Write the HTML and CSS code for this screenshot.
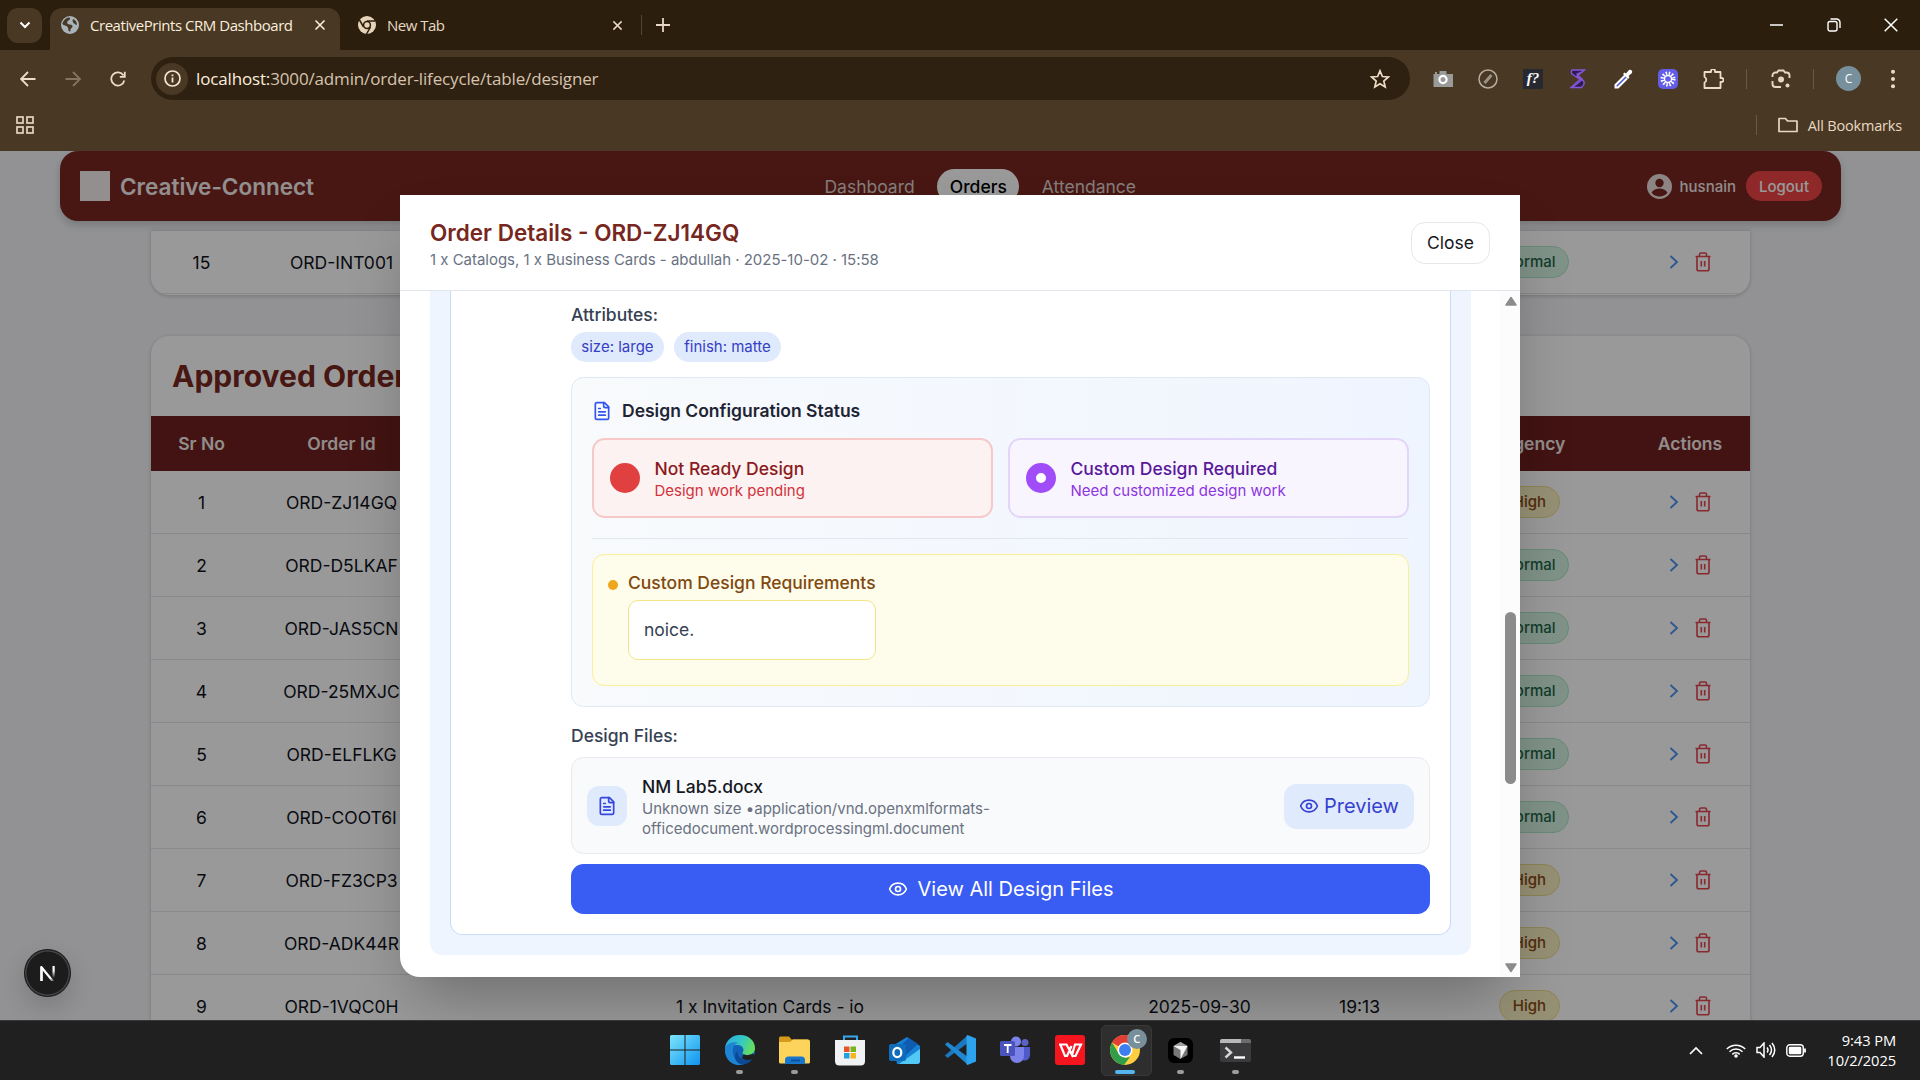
FILE: index.html
```html
<!DOCTYPE html>
<html lang="en">
<head>
<meta charset="utf-8">
<title>CreativePrints CRM Dashboard</title>
<link rel="stylesheet" href="styles.css">
</head>
<body>
<svg class="defs" aria-hidden="true">
  <symbol id="x" viewBox="0 0 12 12"><path d="M1.5 1.5l9 9M10.5 1.5l-9 9" fill="none" stroke="currentColor" stroke-width="1.6"/></symbol>
  <symbol id="chev" viewBox="0 0 10 16"><path d="M1.5 2l6.5 6-6.500 6" fill="none" stroke="#4a90f0" stroke-width="1.8"/></symbol>
  <symbol id="trash" viewBox="0 0 16 20"><path d="M0.500 4.500h15M4.500 4V2.500a1.500 1.500 0 0 1 1.500-1.500h4a1.500 1.500 0 0 1 1.500 1.500V4M2 4.500v12.500a1.800 1.800 0 0 0 1.800 1.800h8.400a1.800 1.800 0 0 0 1.800-1.800V4.500M6.300 9v5.500M9.700 9v5.500" fill="none" stroke="#e4434f" stroke-width="1.600"/></symbol>
  <symbol id="doc" viewBox="0 0 24 24"><g fill="none" stroke="currentColor" stroke-width="2" stroke-linecap="round" stroke-linejoin="round"><path d="M15 2H6a2 2 0 0 0-2 2v16a2 2 0 0 0 2 2h12a2 2 0 0 0 2-2V7z"/><path d="M14 2v4a2 2 0 0 0 2 2h4M10 9H8M16 13H8M16 17H8"/></g></symbol>
  <symbol id="eye" viewBox="0 0 24 24"><g fill="none" stroke="currentColor" stroke-width="2" stroke-linecap="round" stroke-linejoin="round"><path d="M2.060 12.350a1 1 0 0 1 0-.7 10.750 10.750 0 0 1 19.880 0 1 1 0 0 1 0 .7 10.750 10.750 0 0 1-19.880 0"/><circle cx="12" cy="12" r="3"/></g></symbol>
</svg>

<header class="browser">
  <div class="tabs">
    <div class="tab-search"><svg width="12" height="8" viewBox="0 0 12 8"><path d="M1.500 1.500L6 6l4.500-4.500" fill="none" stroke="#fff" stroke-width="2"/></svg></div>
    <div class="tab active">
      <svg width="18" height="18" viewBox="0 0 18 18"><circle cx="9" cy="9" r="9" fill="#a9b3ba"/><path d="M8 1.500c2 .5 1 2-.5 3S5.500 7 7 8s4 .2 4.500 2-2 2-2 4-1.500 2-2 .5 0-3-1.500-4S2 9 1.500 8 4 1.500 8 1.500z M12 3c2 .5 4 3 4 5.500-1 1-2-.5-3-1s-2-3-1-4.500z" fill="#483824"/></svg>
      <span class="tab-name t1">CreativePrints CRM Dashboard</span>
      <svg class="close" width="12" height="12"><use href="#x"/></svg>
    </div>
    <div class="tab idle">
      <svg width="18" height="18" viewBox="0 0 18 18"><circle cx="9" cy="9" r="9" fill="#e8d3b8"/><circle cx="9" cy="9" r="3.400" fill="#e8d3b8" stroke="#2b1e0d" stroke-width="1.500"/><path d="M9 5h8M5.600 11L1.500 4M12.500 11L8.500 18" stroke="#2b1e0d" stroke-width="1.500"/></svg>
      <span class="tab-name t2">New Tab</span>
      <svg class="close" width="11" height="11"><use href="#x"/></svg>
    </div>
    <i class="tab-sep"></i>
    <svg class="plus" width="14" height="14" viewBox="0 0 14 14"><path d="M7 0v14M0 7h14" stroke="#e8d8c3" stroke-width="1.800"/></svg>
    <div class="win">
      <svg width="14" height="14" viewBox="0 0 14 14"><path d="M0 7h13" stroke="#fff" stroke-width="1.500"/></svg>
      <svg width="14" height="14" viewBox="0 0 14 14"><g fill="none" stroke="#fff" stroke-width="1.400"><rect x="1" y="3.500" width="9" height="9.500" rx="2"/><path d="M3.500 1h6a3.500 3.500 0 0 1 3.500 3.500V10"/></g></svg>
      <svg width="14" height="14" viewBox="0 0 14 14"><path d="M.7.7l12.600 12.600M13.300.7L.7 13.300" stroke="#fff" stroke-width="1.500"/></svg>
    </div>
  </div>
  <div class="toolbar">
    <div class="navs">
      <svg width="16" height="16" viewBox="0 0 16 16"><path d="M8 1L1 8l7 7M1 8h14.500" fill="none" stroke="#eddcc6" stroke-width="1.800"/></svg>
      <svg width="16" height="16" viewBox="0 0 16 16"><path d="M8 1l7 7-7 7M15 8H.5" fill="none" stroke="#85755f" stroke-width="1.800"/></svg>
      <svg width="16" height="16" viewBox="0 0 16 16"><path d="M14.300 9.500A6.600 6.600 0 1 1 13.500 4.500M14.800.8v5H9.800" fill="none" stroke="#eddcc6" stroke-width="1.800"/></svg>
    </div>
    <div class="url">
      <span class="info"><svg width="17" height="17" viewBox="0 0 17 17"><circle cx="8.500" cy="8.500" r="7.500" fill="none" stroke="#f4e6d3" stroke-width="1.700"/><path d="M8.500 7.500v5M8.500 4.500v1.700" stroke="#f4e6d3" stroke-width="1.800"/></svg></span>
      <span class="addr"><b>localhost:</b>3000/admin/order-lifecycle/table/designer</span>
      <svg width="20" height="20" viewBox="0 0 20 20"><path d="M10 1.800l2.400 5.700 6 .5-4.600 4 1.400 6L10 14.800 4.800 18l1.400-6-4.600-4 6-.5z" fill="none" stroke="#eddcc6" stroke-width="1.700"/></svg>
    </div>
    <div class="exts">
      <svg width="20" height="20" viewBox="0 0 20 20"><path d="M6.500 2h7v3H20v13H.5V5H2V3h2v2h2.500z" fill="#9a9a98"/><circle cx="10" cy="10.500" r="3.600" fill="none" stroke="#fff" stroke-width="2.200"/></svg>
      <svg width="20" height="20" viewBox="0 0 20 20"><circle cx="10" cy="10" r="9" fill="none" stroke="#b8ada0" stroke-width="1.500"/><path d="M6.500 14l7-8" stroke="#9c9286" stroke-width="3"/></svg>
      <span class="fq">f?</span>
      <svg width="20" height="20" viewBox="0 0 20 20"><path d="M16.500 1H4q-2 3 1.500 5l6.500 4.500L3 18.500h10.500q4-4 2-6.500L9 7z" fill="#2c1c50" stroke="#8556dd" stroke-width="1.400"/><path d="M15 2.500l-6 2.500 5.500 5.500L5 18" fill="none" stroke="#8556dd" stroke-width="1.200"/></svg>
      <svg width="20" height="20" viewBox="0 0 20 20"><path d="M12 6.500L2.500 16v2.500H5L14 9.500" fill="#5059d0" stroke="#fff" stroke-width="2"/><path d="M10 5l1.500-1.500 1.500 1L16 1c2-.8 4 1 3 3l-3.500 3 1 1.500L15 10z" fill="#fff"/></svg>
      <svg width="20" height="20" viewBox="0 0 20 20"><rect width="20" height="20" rx="5" fill="#625ce8"/><circle cx="10" cy="10" r="5.500" fill="none" stroke="#fff" stroke-width="4" stroke-dasharray="1.400 1.480"/><circle cx="10" cy="10" r="3.500" fill="none" stroke="#fff" stroke-width="1.400"/></svg>
      <svg width="21" height="20" viewBox="0 0 20 20"><path d="M1 3h6.500V2a2 2 0 0 1 4 0v1H17v6h1a2 2 0 0 1 0 4h-1v6H1v-5.500a3 3 0 0 0 0-5.500z" fill="none" stroke="#eddcc6" stroke-width="1.800" stroke-linejoin="round"/></svg>
      <i></i>
      <svg class="lens" width="20" height="20" viewBox="0 0 20 20"><g fill="none" stroke="#e8d8c3" stroke-width="1.900"><path d="M1.500 8V6.500a3 3 0 0 1 3-3H6L7.500 1.500h5L14 3.500h1.500a3 3 0 0 1 3 3V9M1.500 12v3a3 3 0 0 0 3 3H10"/></g><circle cx="10" cy="10.500" r="3" fill="#e8d8c3"/><circle cx="16.500" cy="16.500" r="2" fill="#e8d8c3"/></svg>
      <i></i>
      <span class="avatar">C</span>
      <svg class="dots" width="6" height="20" viewBox="0 0 6 20"><g fill="#eddcc6"><circle cx="3" cy="2.700" r="2"/><circle cx="3" cy="10" r="2"/><circle cx="3" cy="17.300" r="2"/></g></svg>
    </div>
  </div>
  <div class="bookmarks">
    <svg width="18" height="18" viewBox="0 0 18 18"><g fill="none" stroke="#e5d5c0" stroke-width="1.700"><rect x="1" y="1" width="6" height="6"/><rect x="11" y="1" width="6" height="6"/><rect x="1" y="11" width="6" height="6"/><rect x="11" y="11" width="6" height="6"/></g></svg>
    <div class="all"><i></i><svg width="20" height="16" viewBox="0 0 20 16"><path d="M1 14.500V1.500h6.500l2 2.500H19v10.500z" fill="none" stroke="#e8d8c3" stroke-width="1.700" stroke-linejoin="round"/></svg><span>All Bookmarks</span></div>
  </div>
</header>

<main class="viewport">
  <nav class="navbar">
    <div class="brand"><i></i><span>Creative-Connect</span></div>
    <div class="links"><a>Dashboard</a><a class="on">Orders</a><a>Attendance</a></div>
    <div class="user">
      <svg width="25" height="25" viewBox="0 0 25 25"><circle cx="12.500" cy="12.500" r="12.500" fill="#fff"/><circle cx="12.500" cy="9" r="4.200" fill="#782720"/><path d="M4.500 18.500c3.500-5.500 12.500-5.500 16 0a10 10 0 0 1-16 0z" fill="#782720"/></svg>
      <span class="uname">husnain</span><span class="logout">Logout</span>
    </div>
  </nav>

  <section class="card first">
    <div class="row"><span>15</span><span>ORD-INT001</span><span></span><span></span><span></span><span><em class="pill normal">Normal</em></span><span class="acts"><svg width="10" height="16"><use href="#chev"/></svg><svg width="16" height="20"><use href="#trash"/></svg></span></div>
  </section>

  <section class="card second">
    <h2>Approved Orders</h2>
    <div class="row head"><span>Sr No</span><span>Order Id</span><span>Description</span><span>Date</span><span>Time</span><span>Urgency</span><span>Actions</span></div>
    <div class="row"><span>1</span><span>ORD-ZJ14GQ</span><span></span><span></span><span></span><span><em class="pill high">High</em></span><span class="acts"><svg width="10" height="16"><use href="#chev"/></svg><svg width="16" height="20"><use href="#trash"/></svg></span></div>
    <div class="row"><span>2</span><span>ORD-D5LKAF</span><span></span><span></span><span></span><span><em class="pill normal">Normal</em></span><span class="acts"><svg width="10" height="16"><use href="#chev"/></svg><svg width="16" height="20"><use href="#trash"/></svg></span></div>
    <div class="row"><span>3</span><span>ORD-JAS5CN</span><span></span><span></span><span></span><span><em class="pill normal">Normal</em></span><span class="acts"><svg width="10" height="16"><use href="#chev"/></svg><svg width="16" height="20"><use href="#trash"/></svg></span></div>
    <div class="row"><span>4</span><span>ORD-25MXJC</span><span></span><span></span><span></span><span><em class="pill normal">Normal</em></span><span class="acts"><svg width="10" height="16"><use href="#chev"/></svg><svg width="16" height="20"><use href="#trash"/></svg></span></div>
    <div class="row"><span>5</span><span>ORD-ELFLKG</span><span></span><span></span><span></span><span><em class="pill normal">Normal</em></span><span class="acts"><svg width="10" height="16"><use href="#chev"/></svg><svg width="16" height="20"><use href="#trash"/></svg></span></div>
    <div class="row"><span>6</span><span>ORD-COOT6I</span><span></span><span></span><span></span><span><em class="pill normal">Normal</em></span><span class="acts"><svg width="10" height="16"><use href="#chev"/></svg><svg width="16" height="20"><use href="#trash"/></svg></span></div>
    <div class="row"><span>7</span><span>ORD-FZ3CP3</span><span></span><span></span><span></span><span><em class="pill high">High</em></span><span class="acts"><svg width="10" height="16"><use href="#chev"/></svg><svg width="16" height="20"><use href="#trash"/></svg></span></div>
    <div class="row"><span>8</span><span>ORD-ADK44R</span><span></span><span></span><span></span><span><em class="pill high">High</em></span><span class="acts"><svg width="10" height="16"><use href="#chev"/></svg><svg width="16" height="20"><use href="#trash"/></svg></span></div>
    <div class="row"><span>9</span><span>ORD-1VQC0H</span><span>1 x Invitation Cards - io</span><span>2025-09-30</span><span>19:13</span><span><em class="pill high">High</em></span><span class="acts"><svg width="10" height="16"><use href="#chev"/></svg><svg width="16" height="20"><use href="#trash"/></svg></span></div>
  </section>

  <div class="overlay">
    <div class="modal">
      <div class="modal-head">
        <div class="modal-title">
          <h3>Order Details - ORD-ZJ14GQ</h3>
          <p>1 x Catalogs, 1 x Business Cards - abdullah · 2025-10-02 · 15:58</p>
        </div>
        <button class="close-btn">Close</button>
      </div>
      <div class="modal-body">
        <div class="panel"><div class="item">
          <div class="label">Attributes:</div>
          <div class="chips"><span>size: large</span><span>finish: matte</span></div>
          <div class="config">
            <div class="config-title"><svg width="20" height="20"><use href="#doc"/></svg>Design Configuration Status</div>
            <div class="statuses">
              <div class="status red"><i></i><div><b>Not Ready Design</b><small>Design work pending</small></div></div>
              <div class="status purple"><i></i><div><b>Custom Design Required</b><small>Need customized design work</small></div></div>
            </div>
            <div class="split">
              <div class="req"><i></i><div><b>Custom Design Requirements</b><div class="note">noice.</div></div></div>
            </div>
          </div>
          <div class="label files">Design Files:</div>
          <div class="file">
            <span class="file-icon"><svg width="20" height="20"><use href="#doc"/></svg></span>
            <div class="file-text"><b>NM Lab5.docx</b><small>Unknown size •application/vnd.openxmlformats-<br>officedocument.wordprocessingml.document</small></div>
            <button class="preview"><svg width="20" height="20"><use href="#eye"/></svg><span>Preview</span></button>
          </div>
          <button class="view"><svg width="20" height="20"><use href="#eye"/></svg><span>View All Design Files</span></button>
        </div></div>
        <div class="scroll">
          <svg width="12" height="10" viewBox="0 0 12 10"><path d="M6 1.500L11 9H1z" fill="#8b8b8b" stroke="#8b8b8b" stroke-width="1.500" stroke-linejoin="round"/></svg>
          <i></i>
          <svg width="12" height="10" viewBox="0 0 12 10"><path d="M6 8.500L11 1H1z" fill="#8b8b8b" stroke="#8b8b8b" stroke-width="1.500" stroke-linejoin="round"/></svg>
        </div>
      </div>
    </div>
  </div>
  <div class="dev-badge"><svg width="16" height="15" viewBox="0 0 16 15"><defs><linearGradient id="ng" x1="0" y1="0" x2="0" y2="1"><stop offset=".4" stop-color="#fff"/><stop offset="1" stop-color="#fff" stop-opacity="0"/></linearGradient><linearGradient id="nd" gradientUnits="userSpaceOnUse" x1="2" y1="2" x2="14" y2="16"><stop offset=".7" stop-color="#fff"/><stop offset="1" stop-color="#fff" stop-opacity="0.1"/></linearGradient></defs><path d="M1.500 15V1.200L13.500 16" fill="none" stroke="url(#nd)" stroke-width="2.200"/><path d="M1.500 15V1" stroke="#fff" stroke-width="2.200"/><rect x="12.500" width="2.200" height="12" fill="url(#ng)"/></svg></div>
</main>

<footer class="taskbar">
  <div class="apps">
    <div class="app"><svg width="30" height="30" viewBox="0 0 30 30"><defs><linearGradient id="wn" x1="0" y1="0" x2="1" y2="1"><stop stop-color="#7be6fb"/><stop offset="1" stop-color="#0f93f0"/></linearGradient></defs><path d="M0 1.500Q0 0 1.500 0H14.500V14.500H0zM15.500 0H28.500Q30 0 30 1.500V14.500H15.500zM0 15.500H14.500V30H1.500Q0 30 0 28.500zM15.500 15.500H30V28.500Q30 30 28.500 30H15.500z" fill="url(#wn)"/></svg></div>
    <div class="app run"><svg width="30" height="30" viewBox="0 0 30 30"><defs><linearGradient id="eg" x1="0" y1="0" x2="1" y2=".3"><stop stop-color="#2aa9e6"/><stop offset=".6" stop-color="#35c9c4"/><stop offset="1" stop-color="#62dd62"/></linearGradient></defs><circle cx="15" cy="15" r="15" fill="#1263b8"/><path d="M0 13C1.500 4 8 0 15 0c9 0 15 6 15 13 0 5-4 7-8 7-4.500 0-5-1.500-4-3 1.500-3-.5-7-5-7C7 10 1 12 0 13z" fill="url(#eg)"/><path d="M0 13c2-5 9-7 14-5-4 0-7 4-6 10 1 6 5 10 10 11.500C8 32-1 25 0 13z" fill="#1e84d4"/><path d="M12.500 17c0 5 5 8 10 8 2 0 4-.7 5.500-1.500C24 29 18 30 16 29.500 9 27 8 19 14 14.500c-1 .8-1.500 1.500-1.500 2.500z" fill="#0c4a93"/><path d="M18.500 19.300c2 1.200 6 1.200 9-.6l2.500 1.800-2 3.500c-4 2-9 1-11-1z" fill="#202020"/></svg></div>
    <div class="app run"><svg width="31" height="28" viewBox="0 0 31 28"><path d="M0 2Q0 .5 1.500.5H10l2.500 3H29V10H0z" fill="#d69a1c"/><path d="M0 6h11l3-2.500h15Q31 3.500 31 5.500V26q0 1.500-1.500 1.500h-28Q0 27.500 0 26z" fill="#fcd35b"/><path d="M6 28v-4q0-3.500 3.500-3.500h13Q26 20.500 26 24v4z" fill="#1777cc"/><path d="M12 24.500h9" stroke="#0d529d" stroke-width="2"/></svg></div>
    <div class="app"><svg width="30" height="31" viewBox="0 0 30 31"><path d="M9 6V1.500h13V6" fill="none" stroke="#38a7ea" stroke-width="2"/><path d="M0 5h30v21q0 4.500-4.500 4.500h-21Q0 30.500 0 26z" fill="#f1f2f3"/><path d="M9 11.500h5.500V17H9z" fill="#e8532b"/><path d="M15.500 11.500H21V17h-5.500z" fill="#78b31e"/><path d="M9 18h5.500v5.500H9z" fill="#249fe0"/><path d="M15.500 18H21v5.500h-5.500z" fill="#f5b51b"/></svg></div>
    <div class="app"><svg width="31" height="29" viewBox="0 0 31 29"><path d="M5 9L18 1l13 9v15q0 3-3 3H8z" fill="#1681d4"/><path d="M14 7l6-5 9 6-12 11z" fill="#0f5bb0"/><path d="M10 28l21-15v12q0 3-3 3z" fill="#52c8f4"/><rect y="8" width="17" height="17" rx="2" fill="#0f6cbd"/><ellipse cx="8.300" cy="16.500" rx="4" ry="4.700" fill="none" stroke="#fff" stroke-width="2.200"/></svg></div>
    <div class="app"><svg width="31" height="30" viewBox="0 0 31 30"><path d="M0 20.500L2.500 23 23 8V0z" fill="#1b77be"/><path d="M0 9.500L2.500 7 23 22v8z" fill="#2088d2"/><path d="M22.500 0L31 3.500v23L22.500 30l-1-1V1z" fill="#2ea3ed"/></svg></div>
    <div class="app"><svg width="30" height="28" viewBox="0 0 30 28"><circle cx="16" cy="5.500" r="5" fill="#7b83eb"/><circle cx="25" cy="6.500" r="3.500" fill="#5a62c3"/><path d="M19 11h11v8a5.500 5.500 0 0 1-11 0z" fill="#5059c9"/><path d="M10 11h14v9a7 7 0 0 1-14 0z" fill="#7b83eb"/><rect y="5" width="15" height="15" rx="1.500" fill="#4b53bc"/><path d="M4 9h7.500M7.700 9v8" stroke="#fff" stroke-width="1.800"/></svg></div>
    <div class="app"><svg width="30" height="30" viewBox="0 0 30 30"><rect width="30" height="30" rx="3" fill="#f4151f"/><path d="M4 9.500h7.500l5.500 10.500 3-10.500h6L20.500 21h-2.500L13 12M5.500 10L10 21h2L16.500 11" fill="none" stroke="#fff" stroke-width="2.200"/></svg></div>
    <div class="app run current"><svg width="30" height="30" viewBox="0 0 30 30"><circle cx="15" cy="15" r="15" fill="#ffcd40"/><path d="M15 15L2 7.500A15 15 0 0 1 28 7.500L28 9H15z" fill="#e33e35"/><path d="M2 7.500L9 19l6 3.500-5 6.500A15 15 0 0 1 2 7.500z" fill="#2f9d4a"/><path d="M8.500 18l6.500 5 5-1-6 8A15 15 0 0 1 8 28z" fill="#2f9d4a"/><circle cx="15" cy="15" r="7.500" fill="#fff"/><circle cx="15" cy="15" r="6" fill="#3d7ff0"/></svg><span class="mini">C</span></div>
    <div class="app run"><svg width="25" height="25" viewBox="0 0 25 25"><rect width="25" height="25" rx="6" fill="#000"/><path d="M12.500 4L19.500 8v9l-7 4-7-4V8z" fill="#777"/><path d="M5.500 8h14l-7 13v-9z" fill="#f4f4f4"/><path d="M12.500 4l7 4h-14z" fill="#9d9d9d"/></svg></div>
    <div class="app run"><svg width="31" height="23" viewBox="0 0 31 23"><rect width="31" height="23" rx="2" fill="#3b3b3d"/><path d="M0 4V2Q0 0 2 0H21V4z" fill="#b8b8b8"/><path d="M21 0h8q2 0 2 2v2H21z" fill="#6c6c6c"/><path d="M5.500 8.500L11 13.500 5.500 18.500" fill="none" stroke="#d5d5d5" stroke-width="2.400"/><path d="M14 18.500h11" stroke="#fff" stroke-width="2.400"/></svg></div>
  </div>
  <div class="tray">
    <svg width="14" height="9" viewBox="0 0 14 9"><path d="M1 8l6-6 6 6" fill="none" stroke="#fff" stroke-width="1.700"/></svg>
    <svg class="wifi" width="20" height="15" viewBox="0 0 20 15"><g fill="none" stroke="#fff" stroke-width="1.500"><path d="M.8 6a13 13 0 0 1 18.400 0"/><path d="M3.500 8.800a9.200 9.200 0 0 1 13 0"/><path d="M6.300 11.400a5.200 5.200 0 0 1 7.400 0"/></g><circle cx="10" cy="13" r="1.800" fill="#fff"/></svg>
    <svg class="vol" width="20" height="16" viewBox="0 0 20 16"><g fill="none" stroke="#fff" stroke-width="1.500"><path d="M1 5.500h3l4-4.500v14l-4-4.500H1z"/><path d="M11 5.500q2 2.500 0 5M13.500 3q4 5 0 10M16 1q5.500 7 0 14"/></g></svg>
    <svg class="bat" width="20" height="13" viewBox="0 0 20 13"><rect x=".8" y=".8" width="16.500" height="11.400" rx="3" fill="none" stroke="#fff" stroke-width="1.400"/><rect x="2.800" y="2.800" width="12.500" height="7.400" rx="1.300" fill="#fff"/><path d="M19 4.500v4" stroke="#fff" stroke-width="1.800"/></svg>
    <div class="clock"><span>9:43 PM</span><span>10/2/2025</span></div>
  </div>
</footer>
</body>
</html>
```

FILE: styles.css
```css
* { box-sizing: border-box; }
body {
  margin: 0;
  width: 1920px;
  height: 1080px;
  overflow: hidden;
  display: flex;
  flex-direction: column;
  font-family: Inter, "Liberation Sans", sans-serif;
}
svg { display: block; flex: none; }
h2, h3, p { margin: 0; }
b, em, small { font-style: normal; display: block; }
button { font-family: inherit; border: 0; margin: 0; }
.defs { position: absolute; width: 0; height: 0; }

/* Browser chrome */
.browser {
  flex: none;
  height: 151px;
  background: #483824;
  font-family: "Open Sans", "Noto Sans", sans-serif;
  color: #e8d8c3;
}
.tabs {
  height: 50px;
  background: #2b1e0d;
  display: flex;
  align-items: center;
  padding-left: 7px;
}
.tab-search {
  width: 35px;
  height: 35px;
  border-radius: 11px;
  background: #483824;
  display: grid;
  place-items: center;
}
.tab { display: flex; align-items: center; height: 42px; }
.tab.active {
  margin: 8px 0 0 8px;
  width: 290px;
  padding: 0 14px 8px 11px;
  background: #483824;
  border-radius: 12px 12px 0 0;
  color: #fbeedd;
}
.tab.idle { width: 301px; padding: 0 18px; }
.tab-name { margin-left: 11px; font-size: 15px; white-space: nowrap; }
.t1 { letter-spacing: -0.46px; }
.t2 { letter-spacing: -0.5px; }
.close { margin-left: auto; }
.tab-sep { width: 1px; height: 20px; background: #57452f; }
.plus { margin-left: 14px; }
.win { margin-left: auto; display: flex; gap: 43px; padding-right: 22px; }
.toolbar { height: 57px; display: flex; align-items: center; }
.navs { display: flex; gap: 29px; padding-left: 20px; }
.url {
  margin-left: 25px;
  width: 1259px;
  height: 43px;
  border-radius: 22px;
  background: #2f2111;
  display: flex;
  align-items: center;
  padding: 0 20px 0 5px;
}
.info {
  width: 32px;
  height: 32px;
  border-radius: 50%;
  background: #483824;
  display: grid;
  place-items: center;
}
.addr {
  margin-left: 8px;
  flex: 1;
  font-size: 17px;
  letter-spacing: -0.15px;
  white-space: nowrap;
  color: #d5c4ae;
}
.addr b { display: inline; font-weight: 400; color: #fbeedd; }
.exts { display: flex; align-items: center; gap: 25px; margin-left: 23px; }
.exts i { width: 1px; height: 20px; background: #6b5a42; margin: 0 -3px; }
.lens { margin-left: 2px; }
.fq {
  width: 20px;
  height: 20px;
  background: #262a30;
  color: #fff;
  font: italic 700 15px/19px "Liberation Serif", serif;
  text-align: center;
}
.avatar {
  width: 25px;
  height: 25px;
  border-radius: 50%;
  background: #78909c;
  color: #fff;
  font-size: 12px;
  line-height: 25px;
  text-align: center;
}
.dots { margin-left: 4px; }
.bookmarks {
  height: 44px;
  display: flex;
  align-items: center;
  justify-content: space-between;
  padding: 0 18px 8px 16px;
}
.all { display: flex; align-items: center; font-size: 14.5px; letter-spacing: -0.18px; }
.all i { width: 1px; height: 20px; background: #6b5a42; margin-right: 21px; }
.all span { margin-left: 10px; }

/* Page */
.viewport {
  position: relative;
  flex: 1;
  overflow: hidden;
  background: #f3f4f7;
}
.navbar {
  position: absolute;
  z-index: 1;
  left: 60px;
  top: 0;
  width: 1781px;
  height: 70px;
  border-radius: 18px;
  background: #782720;
  box-shadow: 0 4px 8px rgba(0, 0, 0, .18);
  color: #fff;
  display: flex;
  justify-content: space-between;
  align-items: center;
  padding: 0 19px 0 20px;
}
.brand { display: flex; align-items: center; gap: 10px; font-size: 22.5px; font-weight: 600; opacity: .93; }
.brand i { width: 30px; height: 30px; background: #fff; }
.links { display: flex; align-items: center; gap: 10px; font-size: 17.500px; color: #ddd0ce; }
.links a { padding: 0 12.500px; height: 35px; line-height: 35px; border-radius: 18px; }
.links .on { background: #fff; color: #000; font-weight: 500; }
.user { display: flex; align-items: center; justify-content: flex-end; font-size: 15px; font-weight: 500; }
.user svg { opacity: .85; }
.uname { margin: 0 10px 0 8px; opacity: .9; }
.logout { width: 76px; height: 30px; line-height: 31px; border-radius: 15px; background: #ee4444; text-align: center; }
.card {
  margin: 0 170px 0 151px;
  width: 1599px;
  background: #fff;
  overflow: hidden;
  box-shadow: 0 1px 4px rgba(0, 0, 0, .2);
}
.first { margin-top: 79px; height: 65px; border-top: 1px solid #dfe1e6; border-radius: 0 0 18px 18px; }
.second { margin-top: 41px; height: 800px; border-radius: 18px; }
.second h2 { height: 80px; line-height: 81px; padding-left: 21px; font-size: 30px; font-weight: 700; color: #782720; }
.row {
  display: grid;
  grid-template-columns: 101px 179px 678px 181px 139px 201px 120px;
  align-items: center;
  height: 63px;
  border-bottom: 1px solid #e3e4e8;
  font-size: 17.500px;
  color: #10131c;
  text-align: center;
}
.head { height: 55px; background: #6e211e; color: #f3e9e8; font-weight: 600; border: 0; }
.pill {
  display: inline-block;
  vertical-align: middle;
  height: 32px;
  line-height: 30px;
  padding: 0 12.500px;
  border-radius: 16px;
  border: 1px solid;
  font-size: 15px;
  font-weight: 500;
}
.normal { background: #d5f5e3; border-color: #b0e6c8; color: #226647; }
.high { background: #fbf2c4; border-color: #ecdc8c; color: #894b12; }
.acts { display: flex; align-items: center; justify-content: center; gap: 16px; }
.overlay { position: absolute; z-index: 2; inset: 0; background: rgba(0, 0, 0, .4); }

/* Order details dialog */
.modal {
  position: absolute;
  left: 400px;
  top: 44px;
  width: 1120px;
  height: 782px;
  background: #fff;
  border-radius: 0 0 0 20px;
  box-shadow: 0 31px 62px -15px rgba(0, 0, 0, .3);
  display: flex;
  flex-direction: column;
}
.modal-head {
  height: 96px;
  padding: 0 30px;
  border-bottom: 1px solid #e2e6ec;
  display: flex;
  align-items: center;
  justify-content: space-between;
}
.modal-title { padding-top: 3px; }
.modal-head h3 { font-size: 22.500px; line-height: 30px; font-weight: 600; color: #782720; }
.modal-head p { font-size: 15px; line-height: 20px; margin-top: 2px; color: #6a7282; letter-spacing: -0.02px; }
.close-btn {
  width: 79px;
  height: 42px;
  background: #fff;
  border: 1px solid #e5e7eb;
  border-radius: 14px;
  font-size: 17.500px;
  color: #15181f;
  padding: 0;
}
.modal-body { flex: 1; min-height: 0; display: flex; padding-left: 30px; }
.panel { width: 1041px; height: 664px; padding: 0 20px 20px; background: #eff5ff; border-radius: 0 0 12px 12px; }
.item {
  height: 644px;
  padding: 11px 20px 20px 120px;
  background: #fff;
  border: 1px solid #c7dcf8;
  border-top: 0;
  border-radius: 0 0 12.500px 12.500px;
}
.label { height: 25px; line-height: 26px; font-size: 17.500px; font-weight: 500; color: #364153; }
.chips { display: flex; gap: 10px; margin-top: 5px; }
.chips span { height: 30px; line-height: 30px; padding: 0 10.300px; border-radius: 15px; background: #dfeafc; color: #3640c4; font-size: 15px; }
.config {
  margin-top: 15px;
  height: 330px;
  padding: 20px;
  border: 1px solid #dfe8f5;
  border-radius: 12.500px;
  background: linear-gradient(90deg, #f8fafc, #eff5ff);
}
.config-title { display: flex; align-items: center; gap: 10px; height: 25px; font-size: 17.500px; font-weight: 600; color: #1e2433; }
.config-title svg { color: #3553ee; }
.statuses { display: grid; grid-template-columns: 1fr 1fr; gap: 15px; margin-top: 15px; }
.status { height: 80px; display: flex; align-items: center; gap: 15px; padding: 0 15px; border: 2.500px solid; border-radius: 12.500px; }
.status i { width: 30px; height: 30px; border-radius: 50%; margin-left: 0.500px; }
.status b, .req b { font-size: 17.500px; line-height: 25px; font-weight: 500; }
.status small { font-size: 15px; line-height: 19px; }
.red { background: #fcf2f2; border-color: #f6c8c8; }
.red i { background: #e04040; }
.red b { color: #8b1a20; }
.red small { color: #d2333b; }
.purple { background: #f9f5ff; border-color: #e3d5fa; }
.purple i { background: #fff; border: 10px solid #a04cf8; }
.purple b { color: #59189a; }
.purple small { color: #8d36e0; }
.split { margin-top: 20px; border-top: 1px solid #e2e7ef; padding-top: 15px; }
.req { height: 132px; display: flex; gap: 10px; padding: 15px; border: 1px solid #fbef96; border-radius: 12.500px; background: #fefcea; }
.req i { width: 10px; height: 10px; border-radius: 50%; background: #eea71c; margin-top: 10px; }
.req b { line-height: 26px; color: #80490f; }
.note { height: 60px; margin-top: 4px; line-height: 58px; padding-left: 15px; border: 1px solid #f5e483; border-radius: 10px; background: #fff; color: #364153; font-size: 17.500px; }
.files { margin-top: 15px; padding-top: 1px; }
.file {
  margin-top: 10px;
  height: 97px;
  padding: 1px 15px 0;
  border: 1px solid #e8eaee;
  border-radius: 12.500px;
  background: #f9fafb;
  display: flex;
  align-items: center;
}
.file-icon { width: 40px; height: 40px; border-radius: 12px; background: #dfeafc; color: #3547e0; display: grid; place-items: center; }
.file-text { margin-left: 15px; flex: 1; }
.file-text b { font-size: 17.500px; line-height: 25px; font-weight: 500; color: #15181f; }
.file-text small { font-size: 15px; line-height: 20px; color: #6a7282; }
.preview { width: 130px; height: 45px; padding: 0; border-radius: 12.500px; background: #dfeafc; color: #3741cf; font-size: 20px; display: flex; align-items: center; justify-content: center; gap: 5px; }
.view { width: 100%; height: 50px; margin-top: 10px; padding: 0; border-radius: 12.500px; background: #395cf3; color: #fff; font-size: 20px; display: flex; align-items: center; justify-content: center; gap: 10px; }
.scroll { width: 20px; margin-left: 29px; background: #fcfcfc; display: flex; flex-direction: column; align-items: center; padding: 5px 0 4px 1px; }
.scroll i { width: 11px; height: 172px; border-radius: 6px; background: #8b8b8b; margin: 306px 0 auto; }

.dev-badge {
  position: absolute;
  z-index: 3;
  left: 24px;
  top: 798px;
  width: 47px;
  height: 48px;
  border-radius: 50%;
  background: #1c1c1c;
  border: 1px solid #1c1c1c;
  box-shadow: inset 0 0 0 1.500px #454545, 0 10px 24px rgba(0, 0, 0, .16);
  display: grid;
  place-items: center;
}

/* Taskbar */
.taskbar {
  flex: none;
  height: 60px;
  background: #202020;
  border-top: 1px solid #383838;
  display: flex;
  justify-content: space-between;
  align-items: center;
  padding: 0 0 1px 657px;
  color: #fff;
}
.apps { display: flex; }
.app { position: relative; width: 55.100px; height: 58px; display: grid; place-items: center; }
.run::after { content: ""; position: absolute; bottom: 5px; width: 7px; height: 4px; border-radius: 2px; background: #9a9a9a; }
.current::before { content: ""; position: absolute; left: 3px; top: 4px; width: 49px; height: 49px; border-radius: 5px; background: #2e2e2e; border: 1px solid #383838; }
.current svg { position: relative; }
.current::after { width: 20px; background: #55b5ee; }
.mini { position: absolute; left: 29px; top: 8px; width: 20px; height: 20px; border-radius: 50%; background: #78909c; font: 600 11px/20px "Open Sans", sans-serif; text-align: center; }
.tray { display: flex; align-items: center; padding-right: 24px; }
.wifi { margin-left: 23px; }
.vol { margin-left: 10px; }
.bat { margin-left: 10px; }
.clock { width: 90px; display: flex; flex-direction: column; text-align: right; font: 14.700px/20px "Open Sans", sans-serif; letter-spacing: -0.1px; }
```
